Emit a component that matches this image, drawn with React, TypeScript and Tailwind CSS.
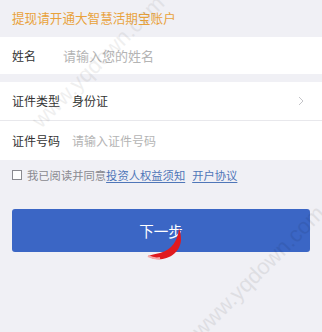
import React from "react";

export default function App() {
  const font = { fontFamily: '"Noto Sans CJK SC", "Noto Sans", sans-serif' };
  return (
    <div
      className="relative w-[322px] h-[332px] overflow-hidden bg-[#f0f0f5]"
      style={font}
    >
      <div className="h-[37px] flex items-center px-[12px] text-[12.6px] text-[#e9a23b]">
        提现请开通大智慧活期宝账户
      </div>
      <div className="h-[37px] bg-white flex items-center px-[12px]">
        <span className="w-[51px] text-[12px] text-[#333]">姓名</span>
        <span className="text-[13px] text-[#b4b4b4]">请输入您的姓名</span>
      </div>
      <div className="h-[8px]" />
      <div className="h-[39px] bg-white flex items-center pl-[12px] pr-[18px] border-b border-[#e8e8ec]">
        <span className="w-[60px] text-[12px] text-[#333]">证件类型</span>
        <span className="flex-1 text-[12px] text-[#333]">身份证</span>
        <svg width="6" height="10" viewBox="0 0 6 10" fill="none">
          <path d="M1 1l4 4-4 4" stroke="#c4c4c8" strokeWidth="1" />
        </svg>
      </div>
      <div className="h-[39px] bg-white flex items-center px-[12px]">
        <span className="w-[60px] text-[12px] text-[#333]">证件号码</span>
        <span className="text-[12px] text-[#b4b4b4]">请输入证件号码</span>
      </div>
      <div className="flex items-center px-[12px] mt-[10px] h-[10px] text-[11.3px]">
        <span className="w-[10px] h-[10px] border border-[#8a8a90] bg-white mr-[5px] box-border" />
        <span className="text-[#8a8a90]">我已阅读并同意</span>
        <span className="text-[#4f76b8] underline underline-offset-2">投资人权益须知</span>
        <span className="text-[#4f76b8] underline underline-offset-2 ml-[7px]">开户协议</span>
      </div>
      <div className="mt-[29px] mx-[12px] h-[43px] rounded-[3px] bg-[#3b66c5] flex items-center justify-center text-white text-[14.5px]">
        下一步
      </div>
      <svg
        className="absolute left-[145px] top-[226px]"
        width="42"
        height="36"
        viewBox="0 0 42 36"
      >
        <path
          d="M3 30 C 14 38, 35 31, 36 14 C 36 9, 35 5, 34 2 C 33 14, 27 24, 15 27 C 10 28, 6 29, 3 30 Z"
          fill="#e01a1f"
        />
        <path d="M3 30 C 7 32, 11 33, 15 32" stroke="#f6a8a8" strokeWidth="2" fill="none" />
      </svg>
      <div
        className="absolute left-[170px] top-[255px] text-[22px] text-[#000] opacity-[0.07] -rotate-45 whitespace-nowrap pointer-events-none"
        style={{ fontFamily: '"Liberation Sans", sans-serif' }}
      >
        www.yqdown.com
      </div>
      <div
        className="absolute left-[10px] top-[45px] text-[22px] text-[#000] opacity-[0.06] -rotate-45 whitespace-nowrap pointer-events-none"
        style={{ fontFamily: '"Liberation Sans", sans-serif' }}
      >
        www.yqdown.com
      </div>
    </div>
  );
}
